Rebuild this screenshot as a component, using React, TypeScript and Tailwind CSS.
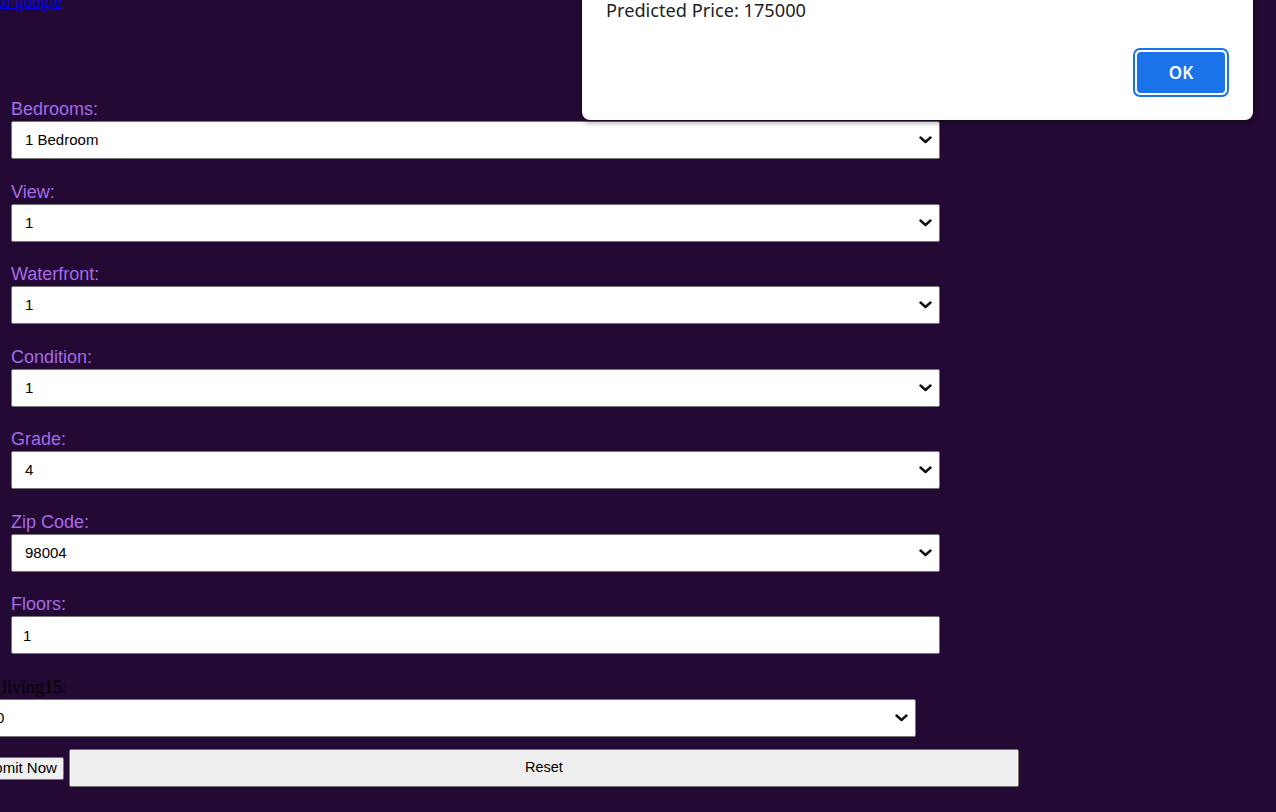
import { useState } from "react";

const fields = [
    { label: "Bedrooms:", value: "1 Bedroom" },
    { label: "View:", value: "1" },
    { label: "Waterfront:", value: "1" },
    { label: "Condition:", value: "1" },
    { label: "Grade:", value: "4" },
    { label: "Zip Code:", value: "98004" },
];

const Chevron = () => (
    <svg width="13" height="8" viewBox="0 0 13 8" className="pointer-events-none absolute right-[8px] top-1/2 -translate-y-1/2">
        <polyline points="1.5,1.5 6.5,6 11.5,1.5" fill="none" stroke="#111" strokeWidth="2.4" strokeLinecap="round" strokeLinejoin="round" />
    </svg>
);

const FakeSelect = ({ value, className = "", pad = "pl-[13px]" }: { value: string; className?: string; pad?: string }) => (
    <div className={`relative h-[38px] w-[929px] ${className}`}>
        <select
            defaultValue={value}
            className={`h-full w-full appearance-none rounded-[2px] border border-[#767676] bg-white pt-[1px] text-[15px] text-black outline-none ${pad}`}
            style={{ fontFamily: '"Liberation Sans", Arial, sans-serif' }}
        >
            <option>{value}</option>
        </select>
        <Chevron />
    </div>
);

export default function App() {
    const [floors, setFloors] = useState("1");
    return (
        <div className="relative min-h-[812px] w-[1276px] overflow-hidden bg-[#240934]" style={{ fontFamily: '"Liberation Sans", Arial, sans-serif' }}>
            <a href="#" className="-ml-[2px] -mt-[7px] block h-[18px] w-fit text-[17px] leading-[18px] text-[#0000ee] underline" style={{ fontFamily: '"Liberation Serif", "Times New Roman", serif' }}>
                to google
            </a>

            <form className="pl-[11px] pt-[88px]">
                {fields.map((f) => (
                    <div key={f.label} className="mb-[22.5px]">
                        <label className="mb-[2px] block text-[18px] leading-[20px] text-[#a46be9]">{f.label}</label>
                        <FakeSelect value={f.value} />
                    </div>
                ))}
                <div>
                    <label className="mb-[2px] block text-[18px] leading-[20px] text-[#a46be9]">Floors:</label>
                    <input
                        value={floors}
                        onChange={(e) => setFloors(e.target.value)}
                        className="h-[38px] w-[929px] rounded-[2px] border border-[#767676] bg-white pl-[11px] pt-[1px] text-[15px] text-black outline-none"
                    />
                </div>
            </form>

            <div className="-ml-[34px] mt-[22px]" style={{ fontFamily: '"Liberation Serif", "Times New Roman", serif' }}>
                <label className="block text-[18px] leading-[23px] text-black">sqft_living15:</label>
                <FakeSelect value="0" className="ml-[21px]" pad="pl-[8px]" />
                <div className="ml-[3px] mt-[12px] flex items-center gap-[5px]" style={{ fontFamily: '"Liberation Sans", Arial, sans-serif' }}>
                    <button type="button" className="h-[23px] rounded-[2px] border border-[#767676] bg-[#efefef] px-[6px] text-[15px] leading-[18px] text-black">
                        Submit Now
                    </button>
                    <button type="button" className="h-[38px] w-[950px] rounded-[2px] border border-[#767676] bg-[#efefef] text-[14.5px] text-black">
                        Reset
                    </button>
                </div>
            </div>

            <div className="absolute left-[582px] top-[-20px] h-[140px] w-[671px] rounded-b-[8px] bg-white shadow-[0_2px_6px_rgba(0,0,0,0.45)]" style={{ fontFamily: '"Noto Sans", "Open Sans", sans-serif' }}>
                <p className="pl-[24px] pt-[18px] text-[18.2px] leading-[24px] text-[#202124]">Predicted Price: 175000</p>
                <div className="absolute bottom-[23px] right-[24px] rounded-[7px] border-2 border-[#1a73e8] p-[2px]">
                    <button type="button" className="flex h-[41px] w-[88px] items-center justify-center rounded-[4px] bg-[#1a73e8] text-[17px] font-semibold text-white">
                        OK
                    </button>
                </div>
            </div>
        </div>
    );
}
